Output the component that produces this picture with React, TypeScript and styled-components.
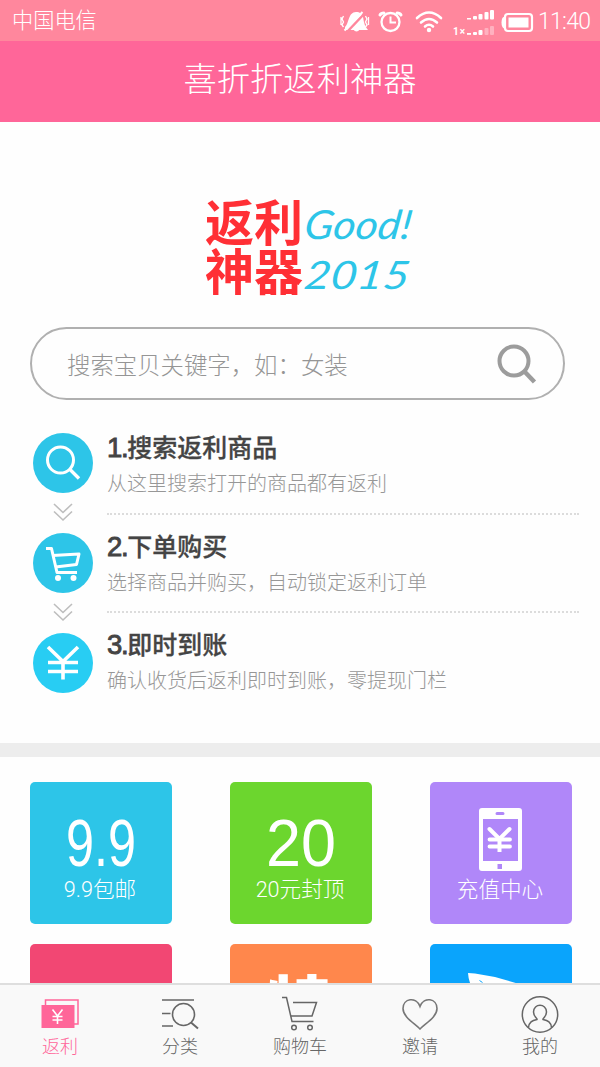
import React from 'react';
import styled, { createGlobalStyle } from 'styled-components';

const GlobalStyle = createGlobalStyle`
  * { box-sizing: border-box; }
  html, body { margin: 0; padding: 0; background: #fff; overflow: hidden; }
  body { font-family: Roboto, "Noto Sans CJK SC", sans-serif; font-weight: 300; }
  svg { display: block; flex: none; overflow: visible; }
`;

const Screen = styled.div`
  width: 600px;
  height: 1067px;
  display: flex;
  flex-direction: column;
  background: #fefefe;
  overflow: hidden;
  white-space: nowrap;
`;

const StatusBar = styled.div`
  flex: none;
  height: 41px;
  padding: 0 9px 0 12px;
  display: flex;
  justify-content: space-between;
  background: #ff879d;
  color: #fff;
  font-size: 21.2px;
  line-height: 41px;
`;

const StatusIcons = styled.div`
  display: flex;
`;

const Clock = styled.span`
  width: 53px;
  font-size: 23px;
  line-height: 43px;
  letter-spacing: -0.7px;
`;

const Header = styled.header`
  flex: none;
  height: 81px;
  background: #ff6699;
  color: #fff;
  text-align: center;
  font-size: 33.3px;
  line-height: 78px;
`;

const Content = styled.main`
  flex: 1;
  min-height: 0;
  overflow: hidden;
`;

const Hero = styled.section`
  height: 621px;
  padding: 70px 0 0;
`;

const LogoArt = styled.svg`
  margin-left: 200px;
`;

const SearchBox = styled.div`
  margin: 15px 0 0 30px;
  width: 535px;
  height: 73px;
  padding: 0 25px 0 35px;
  border: 2px solid #b0b0b0;
  border-radius: 37px;
  display: flex;
  align-items: center;
  justify-content: space-between;
  color: #959595;
  font-size: 23.4px;
`;

const Steps = styled.div`
  margin-top: 25px;
  display: flex;
`;

const StepRail = styled.div`
  width: 60px;
  margin: 8px 14px 0 33px;
  display: flex;
  flex-direction: column;
  align-items: center;
`;

const Disc = styled.div<{ $color: string }>`
  width: 60px;
  height: 60px;
  border-radius: 50%;
  background: ${(p) => p.$color};
  display: flex;
  align-items: center;
  justify-content: center;
`;

const RailGap = styled.div`
  height: 40px;
  padding-top: 10px;
`;

const StepList = styled.div`
  width: 472px;
`;

const Step = styled.div`
  height: 98.3px;
  border-bottom: 2px dotted #dcdcdc;
  padding-top: 9px;
  margin: 0;
  &:first-child { height: 89.5px; padding-top: 0; }
  &:last-child { border-bottom: 0; }
`;

const StepTitle = styled.div`
  height: 47px;
  color: #444;
  font-size: 25px;
  font-weight: 500;
  line-height: 48px;
  -webkit-text-stroke: 0.3px #444;
`;

const StepNumber = styled.span`
  font-family: "Liberation Sans", sans-serif;
  font-size: 27.5px;
  font-weight: 400;
  line-height: 20px;
  letter-spacing: -1.3px;
  -webkit-text-stroke: 0.9px #444;
`;

const StepText = styled.div`
  color: #979797;
  font-size: 20px;
  line-height: 25px;
`;

const Divider = styled.div`
  height: 14px;
  background: #ededed;
`;

const TileGrid = styled.section`
  padding: 25px 30px 0;
  display: grid;
  grid-template-columns: repeat(3, 142px);
  column-gap: 58px;
  row-gap: 20px;
`;

const Tile = styled.div<{ $color: string }>`
  height: 142px;
  padding: 26px 2px 0 0;
  border-radius: 5px;
  background: ${(p) => p.$color};
  color: #fff;
  display: flex;
  flex-direction: column;
  align-items: center;
`;

const TileLabel = styled.div`
  font-size: 21.6px;
  line-height: 34px;
  margin-top: 2px;
`;

const TabBar = styled.nav`
  flex: none;
  height: 84px;
  border-top: 2px solid #dedede;
  background: #f9f9f9;
  display: grid;
  grid-template-columns: repeat(5, 1fr);
`;

const Tab = styled.div<{ $active?: boolean }>`
  display: flex;
  flex-direction: column;
  align-items: center;
  padding-top: 10px;
  color: ${(p) => (p.$active ? '#ff6699' : '#666')};
  font-size: 18px;
  line-height: 27px;
`;

const StatusGlyphs = () => (
  <svg width="198" height="41" viewBox="0 0 198 41" fill="none" stroke="#fff">
    <path d="M5 27 C9 24 8 12 16 12 C20 12 22 14 23 17 C24 23 25 27 28 30 H5Z" fill="#fff" stroke="none" />
    <path d="M13 29 h7 q-3.500 5 -7 0Z" fill="#fff" stroke="none" />
    <path d="M6.500 32.500 L25 13" stroke="#ff879d" strokeWidth="2.500" />
    <path d="M4.500 30.500 L22.500 12" strokeWidth="2" />
    <path d="M3.500 16 l-1.500 3 1.500 3 -1.500 3 1.500 2 M1 17 v8 M25.500 16 l1.500 3 -1.500 3 1.500 3 -1.500 2 M28.500 17 v8" strokeWidth="1.300" />
    <circle cx="50.500" cy="22" r="9" strokeWidth="2.300" />
    <path d="M50.500 16.500 V22.500 H56" strokeWidth="2" />
    <path d="M40 15 q1-2 4-2 M57 13 q3 0 4 2" strokeWidth="3" strokeLinecap="round" />
    <path d="M77 18 Q89 7 101 18 M81 22.500 Q89 15.500 97 22.500 M85 26.500 Q89 23 93 26.500" strokeWidth="2.600" strokeLinecap="round" />
    <circle cx="89" cy="30" r="2.200" fill="#fff" stroke="none" />
    <g fill="#fff" stroke="none">
      <rect x="127" y="18" width="4" height="1.500" />
      <rect x="133" y="16" width="4" height="3.500" rx="1" />
      <rect x="138.500" y="14" width="4" height="5.500" rx="1" />
      <rect x="144.500" y="12" width="4" height="7.500" rx="1" />
      <rect x="150" y="10" width="4" height="9.500" rx="1" />
      <rect x="127" y="33" width="4" height="1.800" />
      <rect x="133" y="32" width="4" height="3" rx="1" />
      <rect x="138.500" y="30" width="4" height="5" rx="1" />
      <rect x="144.500" y="28" width="4" height="7" rx="1" opacity=".35" />
      <rect x="150" y="26" width="4" height="9" rx="1" opacity=".35" />
    </g>
    <text x="113" y="34.500" fontSize="10" fontWeight="700" fill="#fff" stroke="none" textLength="12">1×</text>
    <rect x="165" y="14" width="27" height="17" rx="3" strokeWidth="2.200" />
    <rect x="168.500" y="17.500" width="20" height="10" fill="#fff" stroke="none" />
    <path d="M165 16.500 q-3.500 0-3.500 6 t3.500 6Z" fill="#fff" stroke="none" />
  </svg>
);

const BrandLogo = () => (
  <LogoArt width="220" height="120" viewBox="0 0 220 120">
    <g fill="#ff2f35" fontFamily="Noto Sans CJK SC, sans-serif" fontWeight="700" fontSize="49">
      <text x="5" y="48.500">返利</text>
      <text x="5" y="97.500">神器</text>
    </g>
    <g fill="#2dc5e8" fontFamily="Lato, sans-serif" fontStyle="italic" fontWeight="400">
      <text transform="translate(103 47) skewX(-8)" fontSize="40" textLength="107" lengthAdjust="spacingAndGlyphs">Good!</text>
      <text transform="translate(103 97) skewX(-8)" fontSize="39" textLength="105" lengthAdjust="spacingAndGlyphs">2015</text>
    </g>
  </LogoArt>
);

const DoubleChevron = () => (
  <svg width="20" height="18" viewBox="0 0 20 18" fill="none" stroke="#bdbdbd" strokeWidth="1.600">
    <path d="M1 1 L10 9.500 L19 1 M1 8.500 L10 17 L19 8.500" />
  </svg>
);

const LensIcon = () => (
  <svg width="36" height="36" viewBox="0 0 36 36" fill="none" stroke="#fff" strokeWidth="3">
    <circle cx="15.500" cy="15" r="13" />
    <path d="M24.500 24 L34 33.500" strokeWidth="3.400" />
  </svg>
);

const StepCart = () => (
  <svg width="40" height="40" viewBox="0 0 40 40" fill="none" stroke="#fff" strokeWidth="3" strokeLinejoin="round">
    <path d="M3 5.500 H8.500 L14 29.500 H34" />
    <path d="M9.500 12.500 L36 11 L33.500 21.500 L12.500 24" />
    <g fill="#fff" stroke="none">
      <circle cx="15" cy="35" r="3" />
      <circle cx="30.500" cy="35" r="3" />
    </g>
  </svg>
);

const StepYen = () => (
  <svg width="34" height="34" viewBox="0 0 34 34" fill="none" stroke="#fff" strokeWidth="3.600">
    <path d="M2 1 L17 15.500 L32 1 M17 15 V33.500 M2 16.500 H32 M2 25.500 H32" />
  </svg>
);

const PhoneIcon = () => (
  <svg width="43" height="63" viewBox="0 0 43 63">
    <path fill="#fff" fillRule="evenodd" d="M3 0H40Q43 0 43 3V60Q43 63 40 63H3Q0 63 0 60V3Q0 0 3 0ZM4 11V53H39V11ZM18 4Q16.500 4 16.500 5.500T18 7H24Q25.500 7 25.500 5.500T24 4ZM18.500 56V61H23V56Z" />
    <g fill="none" stroke="#fff" strokeWidth="4" strokeLinecap="round">
      <path d="M10.500 21 L20.500 31 L30.500 21" />
      <path d="M20.500 31 V44" strokeLinecap="butt" />
      <path d="M10.500 31.500 H31 M10.500 38.500 H31" strokeWidth="3.800" />
    </g>
  </svg>
);

const PriceFigure = ({ value }: { value: string }) => (
  <svg width="80" height="63" viewBox="0 0 80 63">
    <text
      x="6"
      y="58"
      fill="#fff"
      fontFamily="Liberation Sans, sans-serif"
      fontWeight="400"
      fontSize="67"
      textLength="70"
      lengthAdjust="spacingAndGlyphs"
    >
      {value}
    </text>
  </svg>
);

const SpecialFigure = () => (
  <svg width="70" height="90" viewBox="0 0 70 90">
    <text x="1" y="61" fill="#fff" fontFamily="Noto Sans CJK SC, sans-serif" fontWeight="900" fontSize="66">特</text>
  </svg>
);

const PlaneFigure = () => (
  <svg width="66" height="60" viewBox="0 0 66 60">
    <path fill="#fff" d="M1 3 L8 3.500 L28 7 L66 18 L50 52 L30 36 L20 50 L17 30 Q2 20 1 3Z" />
    <path d="M12.500 10.500 l3 2" stroke="#0aa4fc" strokeWidth="1" />
  </svg>
);

const tabs = [
  {
    label: '返利',
    icon: (
      <svg width="38" height="36" viewBox="0 0 38 36" fill="none" stroke="#ff6699" strokeWidth="1.500">
        <path d="M4.500 10 V5 H37 V29 H33" />
        <rect x="0.500" y="10" width="33" height="23" fill="#ff6699" stroke="none" />
        <path d="M11.500 14.500 L16.500 21 L21.500 14.500 M16.500 21 V29 M11.500 21.500 H21.500 M11.500 25 H21.500" stroke="#fff" strokeWidth="1.600" />
      </svg>
    ),
  },
  {
    label: '分类',
    icon: (
      <svg width="38" height="36" viewBox="0 0 38 36" fill="none" stroke="#666" strokeWidth="1.600">
        <path d="M1 5 H33 M1 18.500 H9.500 M1 31 H12" />
        <circle cx="22.500" cy="19.500" r="11" />
        <path d="M30 27.500 L37 33.500" strokeWidth="2" />
      </svg>
    ),
  },
  {
    label: '购物车',
    icon: (
      <svg width="38" height="36" viewBox="0 0 38 36" fill="none" stroke="#666" strokeWidth="1.500">
        <path d="M1 2.500 H5.500 L11 26.500 H32.500" />
        <path d="M12 7.500 H35.500 L31 21 H10" />
        <circle cx="13" cy="32.500" r="2.300" />
        <circle cx="29" cy="32.500" r="2.300" />
      </svg>
    ),
  },
  {
    label: '邀请',
    icon: (
      <svg width="38" height="36" viewBox="0 0 38 36" fill="none" stroke="#777" strokeWidth="1.600">
        <path d="M19 34 C13 28 2 22 2 13.500 C2 3.500 15 1 19 11.500 C23 1 36 3.500 36 13.500 C36 22 25 28 19 34Z" />
      </svg>
    ),
  },
  {
    label: '我的',
    icon: (
      <svg width="38" height="38" viewBox="0 0 38 38" fill="none" stroke="#666" strokeWidth="1.500">
        <circle cx="19" cy="19.500" r="17.700" />
        <path d="M7.500 32.500 C8 27 11 25.500 16 24.500 C17 23.500 12.500 22 12.500 17 C12.500 8 25.500 8 25.500 17 C25.500 22 21 23.500 22 24.500 C27 25.500 30 27 30.500 32.500" />
      </svg>
    ),
  },
];

const TabIcon = styled.div`
  height: 38px;
`;

export default function App() {
  return (
    <Screen>
      <GlobalStyle />
      <StatusBar>
        <span>中国电信</span>
        <StatusIcons>
          <StatusGlyphs />
          <Clock>11:40</Clock>
        </StatusIcons>
      </StatusBar>
      <Header>喜折折返利神器</Header>
      <Content>
        <Hero>
          <BrandLogo />
          <SearchBox>
            <span>搜索宝贝关键字，如：女装</span>
            <svg width="42" height="42" viewBox="0 0 42 42" fill="none" stroke="#9c9c9c">
              <circle cx="18" cy="18" r="14.500" strokeWidth="4" />
              <path d="M28 28 L38.500 39" strokeWidth="4.500" />
            </svg>
          </SearchBox>
          <Steps>
            <StepRail>
              <Disc $color="#2dc5e8"><LensIcon /></Disc>
              <RailGap><DoubleChevron /></RailGap>
              <Disc $color="#2dc5e8"><StepCart /></Disc>
              <RailGap><DoubleChevron /></RailGap>
              <Disc $color="#28cdf3"><StepYen /></Disc>
            </StepRail>
            <StepList>
              <Step>
                <StepTitle><StepNumber>1.</StepNumber>搜索返利商品</StepTitle>
                <StepText>从这里搜索打开的商品都有返利</StepText>
              </Step>
              <Step>
                <StepTitle><StepNumber>2.</StepNumber>下单购买</StepTitle>
                <StepText>选择商品并购买，自动锁定返利订单</StepText>
              </Step>
              <Step>
                <StepTitle><StepNumber>3.</StepNumber>即时到账</StepTitle>
                <StepText>确认收货后返利即时到账，零提现门栏</StepText>
              </Step>
            </StepList>
          </Steps>
        </Hero>
        <Divider />
        <TileGrid>
          <Tile $color="#2dc5e8"><PriceFigure value="9.9" /><TileLabel>9.9包邮</TileLabel></Tile>
          <Tile $color="#6cd62e"><PriceFigure value="20" /><TileLabel>20元封顶</TileLabel></Tile>
          <Tile $color="#b087f9"><PhoneIcon /><TileLabel>充值中心</TileLabel></Tile>
          <Tile $color="#f24773" />
          <Tile $color="#ff874c"><SpecialFigure /></Tile>
          <Tile $color="#0aa4fc"><PlaneFigure /></Tile>
        </TileGrid>
      </Content>
      <TabBar>
        {tabs.map((tab, i) => (
          <Tab key={tab.label} $active={i === 0}>
            <TabIcon>{tab.icon}</TabIcon>
            {tab.label}
          </Tab>
        ))}
      </TabBar>
    </Screen>
  );
}
